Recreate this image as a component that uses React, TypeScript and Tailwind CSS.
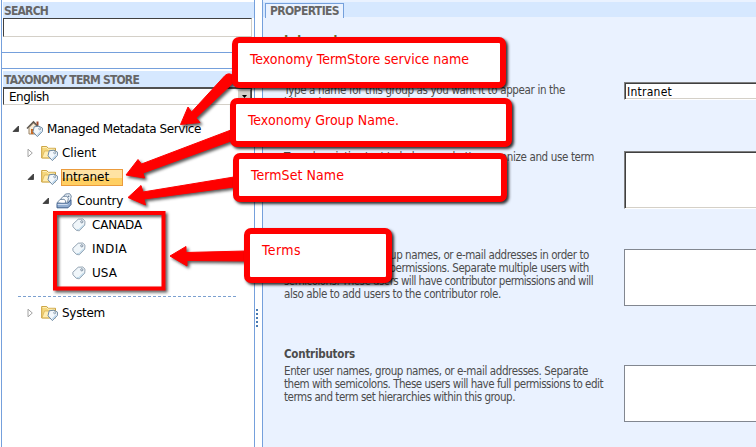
import { useLayoutEffect, useRef, useState } from 'react';
import type { ReactNode } from 'react';

const verdana = "font-['DejaVu_Sans',sans-serif]";
const tahoma = "font-['DejaVu_Sans_Condensed','DejaVu_Sans',sans-serif] [font-stretch:condensed]";

/** A single line of text whose tracking is adjusted to span `width` pixels. */
function Line({ width, className = '', children }: { width: number; className?: string; children: string }) {
  const ref = useRef<HTMLSpanElement>(null);
  const [tracking, setTracking] = useState(0);
  useLayoutEffect(() => {
    const natural = ref.current!.getBoundingClientRect().width;
    setTracking((width - natural) / children.length);
  }, [width, children]);
  return (
    <span ref={ref} className={`block w-max whitespace-nowrap ${className}`} style={{ letterSpacing: tracking }}>
      {children}
    </span>
  );
}

function Tag() {
  return (
    <g>
      <path d="M8.2 6.8 13 6.2 16.5 8.2 16.3 11.6 11.4 16.6 7 11.8Z" fill="#f3f8fc" stroke="#6f8aa3" strokeLinejoin="round" />
      <path d="M11.3 15.2 15.2 11.2" stroke="#bcd6ec" strokeWidth="1.4" />
      <circle cx="13.7" cy="8.8" r="1" fill="#fff" stroke="#7890a6" strokeWidth=".8" />
    </g>
  );
}

function HomeIcon() {
  return (
    <svg width="18" height="18" viewBox="0 0 18 18" fill="none">
      <path d="M10.5 1.5h2v4h-2z" fill="#a54b2d" />
      <path d="M3 7.5 7.5 3 12 7.5V14H3Z" fill="#f6ead6" stroke="#9a8468" />
      <path d="M5 9h2.5v5H5z" fill="#c96b25" />
      <path d="M1 8.5 7.5 1.8 14 8.5" stroke="#5e5850" strokeWidth="1.5" />
      <Tag />
    </svg>
  );
}

function FolderIcon() {
  return (
    <svg width="18" height="18" viewBox="0 0 18 18" fill="none">
      <path d="M.7 14V2.5h5l1.5 1.8h7.3V14Z" fill="#f5d77c" stroke="#c99f3c" />
      <path d="M1.5 3.4h4l1.5 1.8h6.7" stroke="#fff2bd" />
      <path d="M1 13.8 3.5 7h11.2l-2 6.8Z" fill="#ffedb0" stroke="#d5ac4b" strokeWidth=".7" />
      <Tag />
    </svg>
  );
}

function TermSetIcon() {
  return (
    <svg width="17" height="18" viewBox="0 0 17 18" fill="none" strokeLinejoin="round">
      <path d="M6 6.5 9.5 2l4.2-.3 1.6 2.4-.9 3.8-3.6 4.4Z" fill="#eaf2f9" stroke="#758ba4" />
      <path d="M3.5 8.5 7 4.4l4-.2 1.4 2.3-.8 3.5-3 3Z" fill="#f7fafc" stroke="#758ba4" />
      <path d="M1 10.8 4 7.5l4-.2L9.8 9 9 12Z" fill="#fff" stroke="#758ba4" />
      <path d="M1 11.3h10.5l3.5-3.5v4.8L12 15.8H1Z" fill="#90acd0" stroke="#3e5e8c" />
      <path d="M1.6 12.3h10" stroke="#dce9f8" />
      <circle cx="12.7" cy="4.2" r=".8" fill="#58708d" />
    </svg>
  );
}

function TermIcon() {
  return (
    <svg width="14" height="14" viewBox="0 0 14 14" fill="none">
      <path d="M.8 6.3 6.2 1.2 10.8 1 13 3.2 12.7 7.2 7.3 12.8 4.4 12.4 1 8.8Z" fill="#f0f6fa" stroke="#93a3b2" strokeLinejoin="round" />
      <path d="M4.5 11.5 7 11.7 11.8 6.8" stroke="#c0d9e9" strokeWidth="1.2" />
      <circle cx="9.8" cy="3.8" r="1.1" fill="#fff" stroke="#718599" strokeWidth=".9" />
    </svg>
  );
}

function Twisty({ open }: { open: boolean }) {
  return (
    <svg width="8" height="10" viewBox="0 0 8 10" className="shrink-0">
      {open ? <path d="M6.5 2v5.5H1Z" fill="#404040" stroke="#262626" strokeWidth=".7" /> : <path d="M1 1.2 5.3 5 1 8.8Z" fill="#fff" stroke="#a2a2a2" />}
    </svg>
  );
}

type NodeProps = { label: string; width: number; indent: string; icon: ReactNode; open?: boolean; selected?: boolean };

function TreeNode({ label, width, indent, icon, open = false, selected = false }: NodeProps) {
  return (
    <div className={`flex h-6 items-center ${indent}`}>
      <Twisty open={open} />
      <span className="ml-[6px] flex w-[18px] shrink-0">{icon}</span>
      <span
        className={`ml-[2px] flex items-center border ${
          selected ? 'h-[17px] w-[62px] border-[#eb9b3c] bg-linear-to-b from-[#ffe3a3] from-50% to-[#ffcf62] to-50%' : 'h-4 border-transparent'
        }`}
      >
        <Line width={width}>{label}</Line>
      </span>
    </div>
  );
}

function Term({ label, width }: { label: string; width: number }) {
  return (
    <div className="flex h-6 items-center gap-[6px] pl-[70px]">
      <TermIcon />
      <Line width={width}>{label}</Line>
    </div>
  );
}

function PanelTitle({ width, children }: { width: number; children: string }) {
  return (
    <div className={`${tahoma} flex h-4 items-center bg-[#d6e8ff] pt-[2px] pl-px text-[12px] font-bold text-[#666]`}>
      <Line width={width}>{children}</Line>
    </div>
  );
}

function TermStorePanel() {
  return (
    <aside className={`${verdana} flex w-[254px] shrink-0 flex-col border-x border-[#75a0dc] bg-white pt-[2px] text-[12px] leading-4 text-black`}>
      <div className="flex h-[51px] flex-col border-b border-[#75a0dc] pl-px">
        <PanelTitle width={44}>SEARCH</PanelTitle>
        <div className="h-[19px] w-[249px] border border-t-[#404040] border-r-[#d4d0c8] border-b-[#d4d0c8] border-l-[#404040]" />
      </div>
      <div className="h-4 border-b border-[#75a0dc]" />
      <div className="pt-[2px] pl-px">
        <PanelTitle width={135}>TAXONOMY TERM STORE</PanelTitle>
        <div className="flex h-[18px] w-[249px] items-center justify-between border border-t-2 border-t-[#505050] border-r-[#404040] border-b-[#d4d0c8] border-l-[#404040] pl-[5px]">
          <Line width={40}>English</Line>
          <span className="flex h-[15px] w-[14px] items-center justify-center border border-r-[#606060] border-b-[#606060] border-t-white border-l-white bg-[#d4d0c8]">
            <svg width="5" height="3" viewBox="0 0 5 3">
              <path d="M0 0h5L2.5 3Z" />
            </svg>
          </span>
        </div>
      </div>
      <div className="pt-[12px]">
        <TreeNode label="Managed Metadata Service" width={154} indent="pl-[10px]" icon={<HomeIcon />} open />
        <TreeNode label="Client" width={34} indent="pl-[25px]" icon={<FolderIcon />} />
        <TreeNode label="Intranet" width={47} indent="pl-[25px]" icon={<FolderIcon />} open selected />
        <TreeNode label="Country" width={46} indent="pl-[40px]" icon={<TermSetIcon />} open />
        <Term label="CANADA" width={50} />
        <Term label="INDIA" width={35} />
        <Term label="USA" width={25} />
        <div className="mt-[11px] mb-1 ml-[16px] h-px w-[219px] bg-[repeating-linear-gradient(90deg,#7ba0d0_0_3px,transparent_3px_5px)]" />
        <TreeNode label="System" width={43} indent="pl-[25px]" icon={<FolderIcon />} />
      </div>
    </aside>
  );
}

function Splitter() {
  return (
    <div className="flex w-[7px] shrink-0 flex-col gap-[2px] bg-white pt-[309px] pl-px">
      {[0, 1, 2, 3, 4].map((dot) => (
        <span key={dot} className="size-[2px] shrink-0 bg-[#4a7ab0]" />
      ))}
    </div>
  );
}

type Copy = [text: string, width: number];

function Property({ title, lines, height, field }: { title?: Copy; lines: Copy[]; height: string; field: ReactNode }) {
  return (
    <section className={`flex shrink-0 ${height}`}>
      <div className="w-[340px] shrink-0 text-[11.5px] leading-[13px] text-[#4c4c4c]">
        <div className="mb-[3px] h-4 pt-[2px] font-bold">{title && <Line width={title[1]}>{title[0]}</Line>}</div>
        {lines.map(([text, width]) => (
          <Line key={text} width={width}>
            {text}
          </Line>
        ))}
      </div>
      {field}
    </section>
  );
}

const sunken =
  'w-[140px] shrink-0 border border-t-[#808080] border-l-[#808080] border-b-white border-r-0 bg-white shadow-[inset_1px_1px_0_#404040,inset_0_-1px_0_#d4d0c8]';
const flat = 'mt-[19px] h-[57px] w-[140px] shrink-0 border border-[#828790] border-r-0 bg-white';

function PropertiesPanel() {
  return (
    <main className={`${tahoma} min-w-0 flex-1 overflow-hidden border-l border-[#75a0dc] bg-[#eaf2ff] pt-[2px]`}>
      <div className="flex h-[15px] bg-[#d6e8ff] pl-[2px]">
        <div className="mt-px flex h-[15px] w-[79px] items-center border border-b-0 border-[#75a0dc] bg-[#eaf2ff] pl-1 text-[12px] font-bold text-[#666]">
          <Line width={69}>PROPERTIES</Line>
        </div>
      </div>
      <div className="flex flex-col pl-[21px]">
        <div className="h-12 pt-[15px] text-[13px] leading-4 font-bold text-[#666633]">
          <Line width={55}>Intranet</Line>
        </div>
        <Property
          lines={[['Type a name for this group as you want it to appear in the', 281], ['hierarchy.', 48]]}
          height="h-[67px]"
          field={
            <div className={`${verdana} mt-[17px] flex h-[18px] items-center pt-px text-[12px] text-black ${sunken}`}>
              <Line width={47} className="pl-[2px]">Intranet</Line>
            </div>
          }
        />
        <Property
          lines={[['Type descriptive text to help users better organize and use term', 310]]}
          height="h-[98px]"
          field={<div className={`mt-[19px] h-[58px] ${sunken}`} />}
        />
        <Property
          lines={[
            ['Enter user names, group names, or e-mail addresses in order to', 305],
            ['grant group manager permissions. Separate multiple users with', 305],
            ['semicolons. These users will have contributor permissions and will', 309],
            ['also able to add users to the contributor role.', 217],
          ]}
          height="h-[116px]"
          field={<div className={flat} />}
        />
        <Property
          title={['Contributors', 71]}
          lines={[
            ['Enter user names, group names, or e-mail addresses. Separate', 304],
            ['them with semicolons. These users will have full permissions to edit', 319],
            ['terms and term set hierarchies within this group.', 231],
          ]}
          height="h-[101px]"
          field={<div className={flat} />}
        />
      </div>
    </main>
  );
}

function Arrows() {
  return (
    <svg className="absolute inset-0 drop-shadow-[2px_2px_1.5px_rgba(0,0,0,0.65)]" width="756" height="447" fill="#f00" stroke="#f00" strokeLinejoin="round">
      <path d="M180.5 124.5 188 107 191.5 112 225 75.5Q229 72 234 76V82L196 118 200 122.5Z" />
      <path d="M126 175 138 159.5 141.5 164 231 130V141L143 173 144.5 178Z" />
      <path d="M128 197.5 141 185.5 143 192 234 177V187L144 199 145.5 205Z" />
      <path d="M170 256 186 246.5V252.5L246 251V261L187 260.5V266Z" />
      <rect x="55" y="213" width="108.5" height="75.5" fill="none" strokeWidth="4" strokeLinejoin="miter" />
    </svg>
  );
}

function Callout({ place, width, children }: { place: string; width: number; children: string }) {
  return (
    <div className={`absolute rounded-[7px] border-6 border-[#f00] bg-white text-[14px] leading-[17px] text-[#f00] shadow-[2px_2px_3px_rgba(0,0,0,0.8)] ${tahoma} ${place}`}>
      <Line width={width}>{children}</Line>
    </div>
  );
}

export default function App() {
  return (
    <div className="relative flex h-[447px] w-[756px] overflow-hidden bg-white pl-px">
      <TermStorePanel />
      <Splitter />
      <PropertiesPanel />
      <Arrows />
      <Callout place="left-[232px] top-[37px] h-[51px] w-[274px] pl-[12px] pt-[8px]" width={219}>Texonomy TermStore service name</Callout>
      <Callout place="left-[230px] top-[98px] h-[49px] w-[282px] pl-[12px] pt-[8px]" width={151}>Texonomy Group Name.</Callout>
      <Callout place="left-[233px] top-[153px] h-[49px] w-[274px] pl-[12px] pt-[8px]" width={93}>TermSet Name</Callout>
      <Callout place="left-[244px] top-[228px] h-[55px] w-[148px] pl-[12px] pt-[8px]" width={39}>Terms</Callout>
    </div>
  );
}
